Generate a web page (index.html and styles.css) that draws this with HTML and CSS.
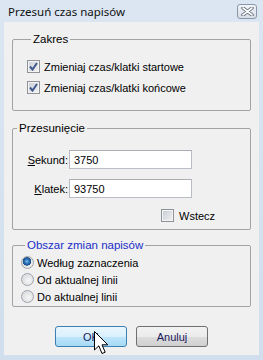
FILE: index.html
```html
<!DOCTYPE html>
<html lang="pl">
  <head>
    <meta charset="UTF-8">
    <title>Przesuń czas napisów</title>
    <link rel="stylesheet" href="styles.css">
  </head>

  <body>
    <div class="window">
      <header class="titlebar">
        <span class="title">Przesuń czas napisów</span>
        <button class="close-btn" type="button">
          <svg width="13" height="9" viewBox="0 0 13 9">
            <path d="M2 1 L11 8 M11 1 L2 8" stroke="#5b6675" stroke-width="3.4" stroke-linecap="round"/>
            <path d="M2 1 L11 8 M11 1 L2 8" stroke="#ffffff" stroke-width="1.6" stroke-linecap="round"/>
          </svg>
        </button>
      </header>

      <div class="client">
        <fieldset class="group group-range">
          <legend class="group-title">Zakres</legend>
          <label class="check-row">
            <span class="checkbox checked"></span>
            Zmieniaj czas/klatki startowe
          </label>
          <label class="check-row">
            <span class="checkbox checked"></span>
            Zmieniaj czas/klatki końcowe
          </label>
        </fieldset>

        <fieldset class="group group-shift">
          <legend class="group-title">Przesunięcie</legend>
          <div class="field-grid">
            <span class="field-label"><u>S</u>ekund:</span>
            <span class="field-input">3750</span>
            <span class="field-label"><u>K</u>latek:</span>
            <span class="field-input">93750</span>
          </div>
          <label class="check-row back-row">
            <span class="checkbox"></span>
            Wstecz
          </label>
        </fieldset>

        <fieldset class="group group-area">
          <legend class="group-title blue">Obszar zmian napisów</legend>
          <label class="radio-row">
            <span class="radio selected"></span>
            Według zaznaczenia
          </label>
          <label class="radio-row">
            <span class="radio"></span>
            Od aktualnej linii
          </label>
          <label class="radio-row">
            <span class="radio"></span>
            Do aktualnej linii
          </label>
        </fieldset>

        <div class="buttons">
          <button class="btn btn-default" type="button">OK</button>
          <button class="btn" type="button">Anuluj</button>
        </div>
      </div>

      <svg class="cursor" width="15" height="24" viewBox="0 0 15 24">
        <path d="M0.5 0.5 L0.5 19 L4.8 14.8 L8 22.5 L11.2 21.2 L8 13.8 L13.8 13.8 Z" fill="#ffffff" stroke="#000000" stroke-width="1"/>
      </svg>
    </div>
  </body>
</html>
```

FILE: styles.css
```css
body {
  margin: 0;
  font-family: "Liberation Sans", Arial, sans-serif;
  font-size: 11px;
  color: #000;
}

.window {
  position: relative;
  display: flex;
  flex-direction: column;
  width: 263px;
  height: 360px;
  background: linear-gradient(#dbe6f2, #d0deed);
}

.titlebar {
  display: flex;
  align-items: center;
  justify-content: space-between;
  height: 22px;
  padding: 0 6px 0 8px;
  box-sizing: border-box;
}

.title {
  font-family: "Noto Sans", sans-serif;
  font-size: 11.5px;
  color: #111;
  padding-top: 1px;
}

.close-btn {
  display: flex;
  align-items: center;
  justify-content: center;
  width: 20px;
  height: 15px;
  margin-top: 1px;
  padding: 0;
  border: 1px solid #8b97a6;
  border-radius: 3px;
  background: linear-gradient(#f1f4f8, #d5dde7);
}

.client {
  flex: 1;
  margin: 0 4px 5px;
  padding: 11px 8px 0;
  background-color: #f0f0f0;
}

.group {
  margin: 0;
  padding: 0;
  border: 1px solid #a3a3a3;
  border-radius: 2px;
}

.group-title {
  margin-left: 4px;
  padding: 0 2px;
  line-height: 13px;
  font-size: 11.5px;
}

.group-title.blue {
  color: #1a2ec8;
}

.group-range {
  padding: 14px 0 16px 14px;
}

.check-row {
  display: flex;
  align-items: center;
  gap: 4px;
  height: 13px;
}

.check-row + .check-row {
  margin-top: 8px;
}

.checkbox {
  display: inline-block;
  width: 11px;
  height: 11px;
  border: 1px solid #8f9398;
  background: linear-gradient(135deg, #c6ccd3, #f2f3f4);
  box-shadow: inset 0 0 0 1px #f4f4f4;
}

.checkbox.checked {
  background:
    url("data:image/svg+xml,%3Csvg xmlns='http://www.w3.org/2000/svg' width='11' height='11'%3E%3Cpath d='M2 5.5 L4.5 8.5 L9 2' fill='none' stroke='%23435a8c' stroke-width='2'/%3E%3C/svg%3E"),
    linear-gradient(135deg, #c9ced6, #f3f4f5);
}

.group-shift {
  margin-top: 11px;
  padding: 15px 0 7px 0;
}

.field-grid {
  display: grid;
  grid-template-columns: 55px 123px;
  column-gap: 1px;
  row-gap: 10px;
  align-items: center;
}

.field-label {
  text-align: right;
}

.field-input {
  height: 19px;
  box-sizing: border-box;
  padding: 2px 4px;
  line-height: 14px;
  background: #fff;
  border: 1px solid #b8bcc4;
  border-top-color: #abadb3;
}

.back-row {
  margin: 11px 0 0 148px;
  gap: 5px;
}

.group-area {
  margin-top: 9px;
  padding: 4px 0 3px 8px;
}

.radio-row {
  display: flex;
  align-items: center;
  gap: 3px;
  height: 13px;
}

.radio-row + .radio-row {
  margin-top: 4px;
}

.radio {
  display: inline-block;
  width: 11px;
  height: 11px;
  border: 1px solid #a0a4a8;
  border-radius: 50%;
  background: radial-gradient(circle at 60% 60%, #f6f6f6, #cfd3d8);
}

.radio.selected {
  background:
    radial-gradient(circle at 45% 40%, #8fc5ee 0, #2f79c0 2px, #1b4d86 4px, transparent 4.5px),
    radial-gradient(circle at 60% 60%, #f6f6f6, #cfd3d8);
}

.buttons {
  display: flex;
  justify-content: center;
  gap: 9px;
  margin-top: 19px;
}

.btn {
  width: 72px;
  height: 21px;
  padding: 0;
  font-family: "Liberation Sans", Arial, sans-serif;
  font-size: 11px;
  color: #1a1a5a;
  border: 1px solid #707070;
  border-radius: 3px;
  background: linear-gradient(#f2f2f2 0%, #ebebeb 50%, #dddddd 51%, #cfcfcf 100%);
}

.btn-default {
  border-color: #3c7fb1;
  background: linear-gradient(#eaf6fd 0%, #d9f0fc 50%, #bee6fd 51%, #a7d9f5 100%);
}

.cursor {
  position: absolute;
  left: 94px;
  top: 331px;
}
```
